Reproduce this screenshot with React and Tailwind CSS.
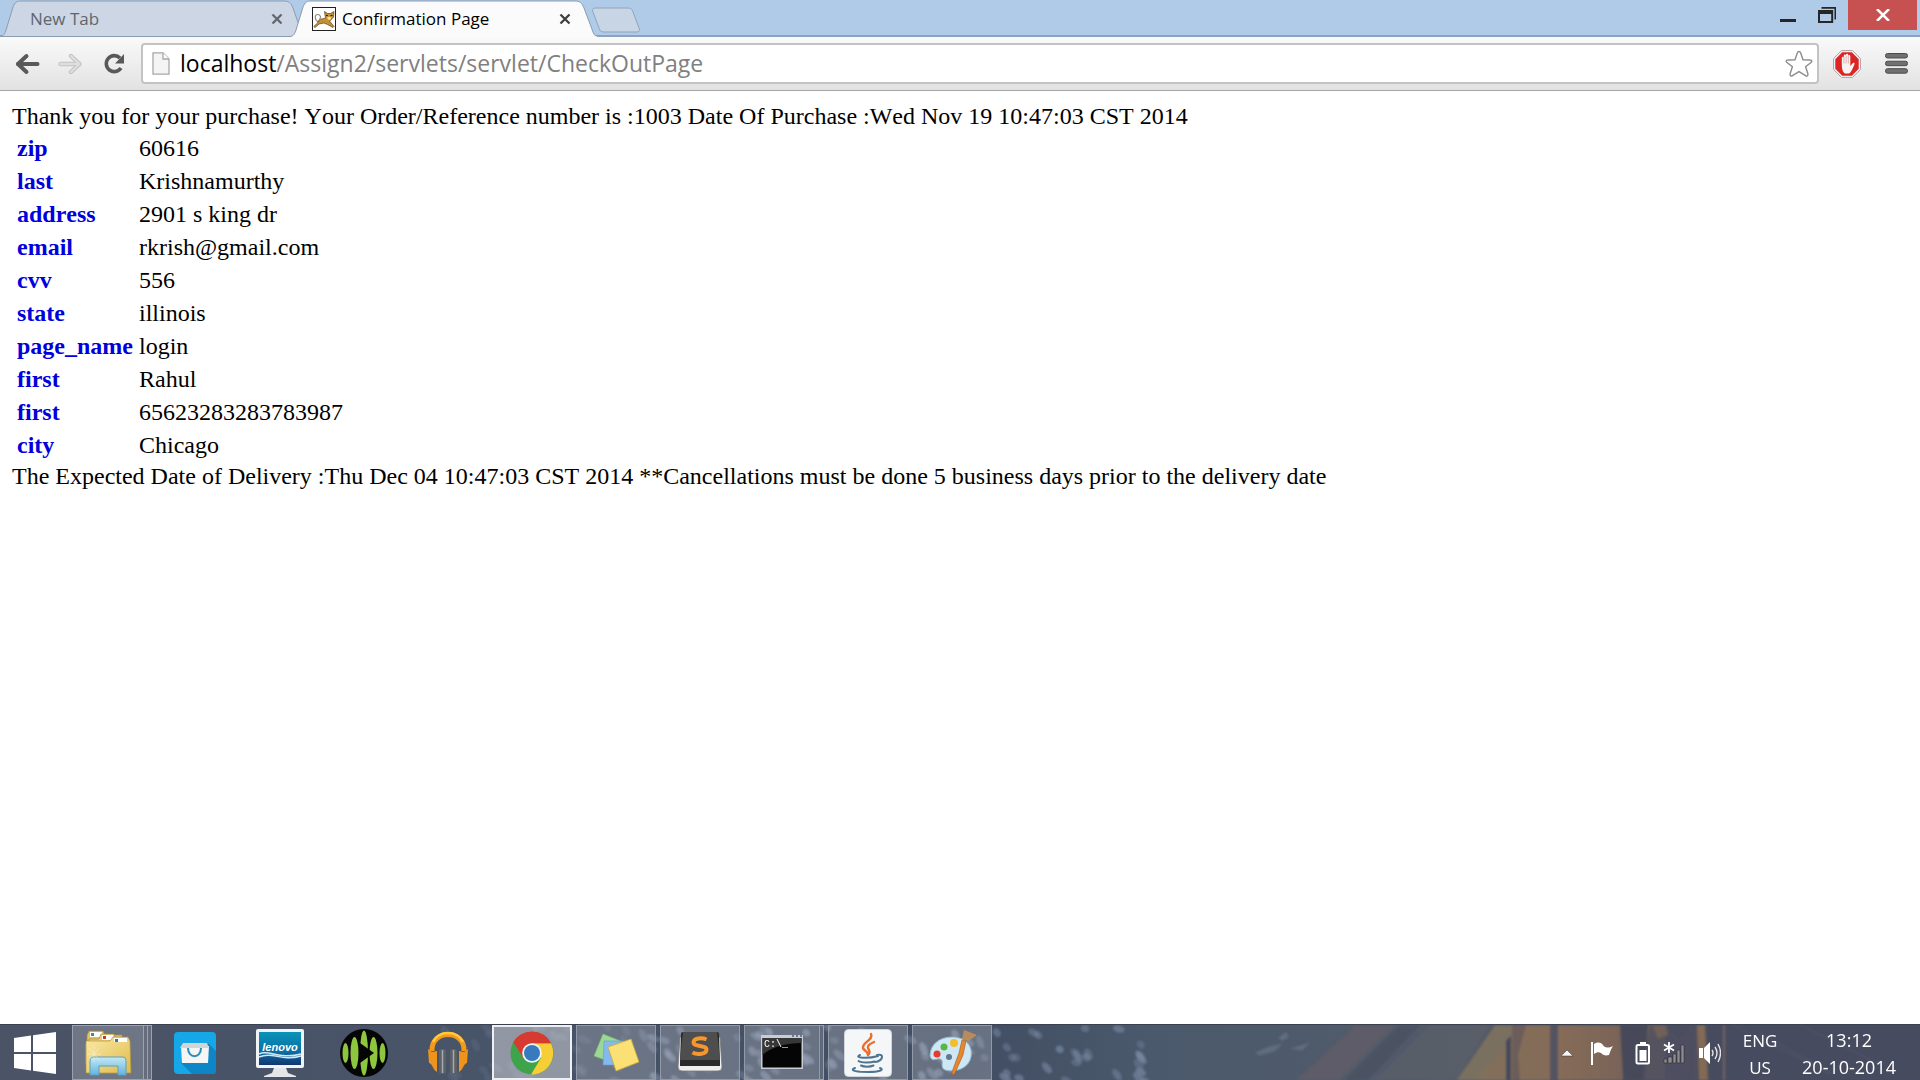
import React from "react";

const fields = [
  ["zip", "60616"],
  ["last", "Krishnamurthy"],
  ["address", "2901 s king dr"],
  ["email", "rkrish@gmail.com"],
  ["cvv", "556"],
  ["state", "illinois"],
  ["page_name", "login"],
  ["first", "Rahul"],
  ["first", "65623283283783987"],
  ["city", "Chicago"],
];

/* ---------- browser chrome ---------- */

function CloseGlyph({ color }) {
  return (
    <svg viewBox="0 0 12 12" className="size-3" aria-hidden="true">
      <path d="M1.5 1.5 10.5 10.5M10.5 1.5 1.5 10.5" stroke={color} strokeWidth="2.3" />
    </svg>
  );
}

function TomcatIcon() {
  return (
    <svg viewBox="0 0 24 24" className="size-6 shrink-0" aria-hidden="true">
      <rect x=".5" y=".5" width="23" height="23" fill="#fff" stroke="#222" />
      <path d="M6.500 15C2 13 2.500 7 6 7.500 9 8 9 11 7.500 12" fill="none" stroke="#8a8578" strokeWidth="1.100" />
      <path d="M7 13C9 11.500 12 12 13.500 11L12.500 4.500 15.500 6.500H18.500L22 4.500 21.500 10 19 13 17.500 14 22 19.500 21 20.500 15.500 17.500 12 16 7 17 3 20.500 1.800 19.500 5.500 16z" fill="#c58f33" stroke="#5a4418" strokeWidth=".7" />
      <path d="M14 8.500h2M18.500 8.500h2" stroke="#2d2410" strokeWidth="1.200" />
      <path d="M15 10.500l2-.8 2.500.8-1 2.200h-2.500z" fill="#f6e2a0" />
    </svg>
  );
}

function TabStrip() {
  return (
    <header className="flex h-[37px] items-start bg-[#b0cbe8] shadow-[inset_0_-2px_0_#8ba3c0]">
      <div role="tablist" className="flex h-[37px]">
        <div className="relative h-[37px] w-[296px]">
          <svg viewBox="0 0 306 37" className="absolute left-0 top-0 h-[37px] w-[306px]" aria-hidden="true">
            <path d="M0 36.500C4 36 5 33 6 30L13 7C15 2 17 1 21 1H284C289 1 291 3 293 8L303 36.500Z" fill="#ccd6e4" stroke="#8b9bb0" />
          </svg>
          <div className="relative flex h-full items-center pl-[30px] pr-[13px]">
            <button role="tab" aria-selected="false" className="flex-1 text-left text-[17px] text-[#60666e] [font-kerning:none]">New Tab</button>
            <button aria-label="Close New Tab" className="size-3"><CloseGlyph color="#63686f" /></button>
          </div>
        </div>
        <div className="relative h-[37px] w-[300px]">
          <svg viewBox="0 0 312 37" className="absolute left-[-6px] top-0 h-[37px] w-[312px]" aria-hidden="true">
            <path d="M0 37C4 36 5 33 6 30L13 7C15 2 17 1 21 1H285C290 1 292 3 294 8L303 32C304 35 305 36 310 37Z" fill="#fbfbfb" />
            <path d="M0 36.500C4 36 5 33 6 30L13 7C15 2 17 1 21 1H285C290 1 292 3 294 8L303 32C304 35 305 36 310 36.500" fill="none" stroke="#8b9bb0" />
          </svg>
          <div className="relative flex h-full items-center gap-[6px] pl-4 pr-[25px]">
            <TomcatIcon />
            <button role="tab" aria-selected="true" className="flex-1 whitespace-nowrap text-left text-[17px] text-black [font-kerning:none]">Confirmation Page</button>
            <button aria-label="Close Confirmation Page" className="size-3"><CloseGlyph color="#3f3f3f" /></button>
          </div>
        </div>
      </div>
      <button aria-label="New tab" className="-ml-1 mt-[7px]">
        <svg viewBox="0 0 48 26" className="h-[26px] w-12" aria-hidden="true">
          <path d="M4 1H35C39 1 40 2 41 5L47 21C48 24 47 25 44 25H12C9 25 8 24 7 21L1 5C0 2 1 1 4 1Z" fill="#c8d5e5" stroke="#8fa5bf" />
        </svg>
      </button>
      <div className="ml-auto flex items-start pr-[3px]">
        <button aria-label="Minimize" className="flex h-[30px] w-9 items-center justify-center">
          <svg viewBox="0 0 16 16" className="size-4" aria-hidden="true"><path d="M0 12h16v3H0z" fill="#262626" /></svg>
        </button>
        <button aria-label="Restore" className="flex h-[30px] w-[42px] items-center justify-center">
          <svg viewBox="0 0 18 16" className="h-4 w-[18px]" aria-hidden="true">
            <path d="M3.500 0H18V12.500H16.500V1.800H3.500z" fill="#262626" />
            <path d="M0 3h15.200v13H0zM2 7v7h11.200V7z" fill="#262626" fillRule="evenodd" />
          </svg>
        </button>
        <button aria-label="Close" className="flex h-[30px] w-[69px] items-center justify-center bg-[#c75050]">
          <svg viewBox="0 0 14 12" className="h-3 w-[14px]" aria-hidden="true"><path d="M1 0 13 12M13 0 1 12" stroke="#fff" strokeWidth="2.500" /></svg>
        </button>
      </div>
    </header>
  );
}

function Toolbar() {
  return (
    <nav className="flex h-[54px] items-center border-b border-[#a6a6a6] bg-gradient-to-b from-[#fafafa] to-[#e2e2e2] pl-[15px] pr-3">
      <button aria-label="Back" className="mr-[18px]">
        <svg viewBox="0 0 25 22" className="h-[22px] w-[25px]" fill="none" stroke="#595959" aria-hidden="true">
          <path d="M3 11H22.500" strokeLinecap="round" strokeWidth="4" /><path d="M11.500 3 3 11l8.500 8" strokeLinecap="round" strokeLinejoin="round" strokeWidth="4" />
        </svg>
      </button>
      <button aria-label="Forward" disabled className="mr-5">
        <svg viewBox="0 0 25 22" className="h-[22px] w-[25px]" fill="none" aria-hidden="true">
          <path d="M2.500 11H21M13 3 21.500 11l-8.500 8" stroke="#c3c3c3" strokeWidth="4.400" strokeLinecap="round" strokeLinejoin="round" />
          <path d="M2.500 11H21M13 3 21.500 11l-8.500 8" stroke="#dedede" strokeWidth="2.400" strokeLinecap="round" strokeLinejoin="round" />
        </svg>
      </button>
      <button aria-label="Reload" className="mr-[16px]">
        <svg viewBox="0 0 22 22" className="size-[22px]" aria-hidden="true">
          <path d="M17 5A8 8 0 1 0 18 15" fill="none" stroke="#595959" strokeWidth="3.600" />
          <path d="M21 1V10.500H12z" fill="#595959" />
        </svg>
      </button>
      <div className="flex h-[41px] min-w-0 flex-1 items-center rounded-[4px] border-2 border-[#c3c3c3] bg-white pl-[9px] pr-1">
        <svg viewBox="0 0 18 23" className="mr-[10px] h-[23px] w-[18px] shrink-0" aria-hidden="true">
          <path d="M1 .8H11L17 7V22.200H1z" fill="#f4f4f6" stroke="#a8a8a8" strokeWidth="1.300" />
          <path d="M11 .8V7H17" fill="#fff" stroke="#a8a8a8" strokeWidth="1.300" />
        </svg>
        <div className="relative h-full min-w-0 flex-1 text-[23px] leading-[37px]">
          <input aria-label="Address" type="url" className="absolute inset-0 w-full bg-transparent outline-none" />
          <span className="pointer-events-none relative whitespace-nowrap text-[#808080]">
            <span className="text-black">localhost</span>/Assign2/servlets/servlet/CheckOutPage
          </span>
        </div>
        <button aria-label="Bookmark this page">
          <svg viewBox="0 0 28 28" className="size-7" aria-hidden="true">
            <path d="M14 1.500C15 1.500 15.500 2.500 15.800 3.300L18 9.800 25 10C27 10 27.300 11.500 26 12.500L20.600 16.800 22.800 23.500C23.500 25.500 22 26.600 20.500 25.600L14 21.600 7.500 25.600C6 26.600 4.500 25.500 5.200 23.500L7.400 16.800 2 12.500C.7 11.500 1 10 3 10L10 9.800 12.200 3.300C12.500 2.500 13 1.500 14 1.500Z" fill="#fff" stroke="#8c8c8c" strokeWidth="1.400" />
          </svg>
        </button>
      </div>
      <button aria-label="Blocking extension" className="ml-[14px] mr-[24px]">
        <svg viewBox="0 0 28 28" className="size-7" aria-hidden="true">
          <path d="M8.500.5h11l8 8v11l-8 8h-11l-8-8v-11z" fill="#eee" stroke="#b9a5a5" />
          <path d="M9.200 2.300h9.600l6.900 6.900v9.600l-6.900 6.900H9.200L2.300 18.800V9.200z" fill="#dd2424" />
          <path d="M8.800 14V7.800c0-1.500 2-1.500 2 0V5.800c0-1.600 2.200-1.600 2.200 0V4.900c0-1.600 2.200-1.600 2.200 0v1.300c0-1.500 2.100-1.500 2.100 0V16l2.200-2.600c1-1.200 2.600-.4 2 .9C19.800 18 18.500 22.500 16 23.500h-4c-2-1-3.200-4-3.200-9.500z" fill="#f6f3f1" />
          <path d="M10.900 7v6.500M13.100 6v7.500M15.300 6v7.500" stroke="#cf8c8c" strokeWidth=".6" />
        </svg>
      </button>
      <button aria-label="Menu">
        <svg viewBox="0 0 23 21" className="h-[21px] w-[23px]" fill="#707070" stroke="#4c4c4c" aria-hidden="true">
          <rect x=".5" y=".5" width="22" height="4.500" rx="2" /><rect x=".5" y="8.200" width="22" height="4.500" rx="2" /><rect x=".5" y="15.700" width="22" height="4.500" rx="2" />
        </svg>
      </button>
    </nav>
  );
}

/* ---------- taskbar ---------- */

function noise(n) {
  const v = Math.sin(n * 127.1 + 11.7) * 43758.5453;
  return v - Math.floor(v);
}

const petals = Array.from({ length: 120 }, (_, i) => {
  const x = 430 + noise(i) * 720;
  return { x, y: noise(i + 300) * 58, r: 15 + noise(i + 600) * 55, s: 4 + noise(i + 900) * 4, o: x < 640 ? 0.2 : 0.3 + noise(i + 1200) * 0.4 };
});

function Wallpaper() {
  return (
    <svg viewBox="0 0 1920 56" preserveAspectRatio="none" className="absolute inset-0 h-full w-full" aria-hidden="true">
      <defs>
        <linearGradient id="wall" x1="0" x2="1" y1="0" y2="0">
          <stop offset="0" stopColor="#4b5366" /><stop offset=".25" stopColor="#485468" /><stop offset=".5" stopColor="#414d62" />
          <stop offset=".6" stopColor="#4a596c" /><stop offset=".7" stopColor="#505b6b" /><stop offset=".77" stopColor="#545b69" />
          <stop offset=".86" stopColor="#4a4e5d" /><stop offset="1" stopColor="#474c60" />
        </linearGradient>
        <filter id="soft" x="-5%" y="-20%" width="110%" height="140%"><feGaussianBlur stdDeviation="1.300" /></filter>
        <linearGradient id="wood" x1="0" x2="1" y1="0" y2="0">
          <stop offset="0" stopColor="#80705c" /><stop offset=".5" stopColor="#866c58" /><stop offset="1" stopColor="#705e58" />
        </linearGradient>
      </defs>
      <rect width="1920" height="56" fill="url(#wall)" />
      <g filter="url(#soft)">
        {petals.map((p, i) => (
          <ellipse key={i} cx={p.x} cy={p.y} rx={p.s} ry="3.600" fill="#7d8ba6" opacity={p.o} transform={`rotate(${p.r} ${p.x} ${p.y})`} />
        ))}
        <path d="M1255 28l14-6 14-3-9 8-15 4zM1278 13l8-6 3 5-7 4zM1290 24l20-6-8 8z" fill="#71819a" opacity=".5" />
        <path d="M1296 56 1355 0h40l-55 56z" fill="#5d5c68" />
        <path d="M1345 56 1400 0h20l-52 56z" fill="#4c5362" />
        <path d="M1375 56 1430 0h60l-34 56z" fill="#5b5f6a" opacity=".7" />
        <path d="M1457 56 1495 0h170v56z" fill="url(#wood)" />
        <path d="M1457 56 1497 0h28l-50 56z" fill="#7a6f60" />
        <path d="M1506 16l5-5v45h-5z" fill="#424a5c" /><path d="M1512 0h14l-8 30 2 26h-8z" fill="#6c5d5a" />
        <path d="M1550 0h8v56h-8z" fill="#525362" /><path d="M1620 0h28l-3 56h-22z" fill="#464a5a" />
        <path d="M1650 0h17l13 15 11-15h6v56h-55z" fill="#505062" opacity=".85" />
        <path d="M1652 0h14l2 10-10 4z" fill="#756557" opacity=".8" />
        <path d="M1697 0h8l3 56h-9z" fill="#836a55" /><path d="M1708 0h212v56h-208z" fill="#474c60" />
        <path d="M1724 0v56" stroke="#716160" strokeWidth="2" />
        <path d="M1732 0 1830 50M1760 8l70 40M1800 0l80 40" stroke="#55566a" strokeWidth="2" opacity=".6" fill="none" />
      </g>
    </svg>
  );
}

function ExplorerIcon() {
  return (
    <svg viewBox="0 0 48 48" className="size-12" aria-hidden="true">
      <defs><linearGradient id="fold" x1="0" x2="1" y1="0" y2="1"><stop offset="0" stopColor="#fae9a4" /><stop offset="1" stopColor="#dfbb4f" /></linearGradient>
        <linearGradient id="stand" x1="0" x2="0" y1="0" y2="1"><stop offset="0" stopColor="#c5e9f5" /><stop offset="1" stopColor="#62b4dd" /></linearGradient></defs>
      <path d="M3 44V6l2-4h14l2 4h17v38z" fill="#e3c464" stroke="#a88a3a" strokeWidth=".7" /><path d="M6 3h12v5H6z" fill="#fff" /><path d="M7 4h3v3H7z" fill="#3e9f47" />
      <path d="M5 44V10h10l2-5h13l2 5h12v34z" fill="#ecd077" stroke="#a88a3a" strokeWidth=".7" /><path d="M18 6h11v5H18z" fill="#fff" /><path d="M19 7h3v3h-3z" fill="#c73827" />
      <path d="M2 44V12h24l3-4h15l2 4 1 32z" fill="url(#fold)" stroke="#b0923f" strokeWidth=".7" /><path d="M30 9h13v4H30z" fill="#fff" /><path d="M31 10h3v3h-3z" fill="#2f78ba" />
      <path d="M6 46V32c0-3 1-4 4-4h28c3 0 4 1 4 4v14h-8v-9H15v9z" fill="url(#stand)" stroke="#5d9fc0" />
      <path d="M10 17v16M3 25h14M5 19l10 12M15 19 5 31" stroke="#fff" strokeWidth=".7" opacity=".5" />
    </svg>
  );
}
function StoreIcon() {
  return (
    <svg viewBox="0 0 48 48" className="size-12" aria-hidden="true">
      <rect x="2" y="3" width="42" height="42" rx="4" fill="#16a7e8" /><path d="M9 34 36 14l8 8v19q0 4-4 4H20z" fill="#0d86c8" />
      <path d="M9 17h28l-1 17H10z" fill="#f5f5f5" /><path d="M11 14h24l2 5H8z" fill="#d2d5d8" />
      <path d="M16 19c0 11 13 11 13 0" fill="none" stroke="#2a8fb8" strokeWidth="2" />
    </svg>
  );
}
function LenovoIcon() {
  return (
    <svg viewBox="0 0 48 48" className="size-12" aria-hidden="true">
      <defs><linearGradient id="scr" x1="0" x2="0" y1="0" y2="1"><stop offset="0" stopColor="#0994b8" /><stop offset=".6" stopColor="#0b6ea5" /><stop offset="1" stopColor="#12366f" /></linearGradient></defs>
      <rect width="48" height="39" rx="2" fill="#f1f4f6" /><rect x="3" y="3" width="42" height="33" fill="url(#scr)" />
      <path d="M3 25c10-5 20 6 42 0M3 28c14-6 22 5 42-1" fill="none" stroke="#cfe9f5" strokeWidth="1.500" />
      <text x="24" y="22" textAnchor="middle" fill="#fff" fontSize="11" fontWeight="700" fontStyle="italic" fontFamily="Liberation Sans, sans-serif">lenovo</text>
      <path d="M18 39h12l2 5 8 3v1H8v-1l8-3z" fill="#e4e6e8" />
    </svg>
  );
}
function PlayerIcon() {
  return (
    <svg viewBox="0 0 48 48" className="size-12" aria-hidden="true">
      <circle cx="24" cy="24" r="24" fill="#050505" />
      <g fill="#8dc63f"><ellipse cx="5.500" cy="24" rx="3" ry="10" /><ellipse cx="14.500" cy="24" rx="4" ry="16" /><ellipse cx="24" cy="24" rx="4" ry="22.500" /><ellipse cx="33.500" cy="24" rx="4" ry="16" /><ellipse cx="42.500" cy="24" rx="3" ry="10" /></g>
      <path d="M20 14 34 24 20 34z" fill="#050505" />
    </svg>
  );
}
function HeadphonesIcon() {
  return (
    <svg viewBox="0 0 48 48" className="size-12" aria-hidden="true">
      <path d="M8 22C7 0 41 0 40 22" fill="none" stroke="#f39a1b" strokeWidth="5" /><path d="M9 13C15 1 33 1 39 13" fill="none" stroke="#ffc83d" strokeWidth="2.500" />
      <path d="M4 20l4 3 5-1v21C8 40 9 35 5 34zM44 20l-4 3-5-1v21c5-3 4-8 8-9z" fill="#ee931c" />
      <rect x="15" y="20" width="7" height="25" rx="2" fill="#5d6065" /><rect x="26" y="20" width="7" height="25" rx="2" fill="#5d6065" /><path d="M18.500 21v23M29.500 21v23" stroke="#a5abb0" strokeWidth="1.500" />
    </svg>
  );
}
function ChromeIcon() {
  return (
    <svg viewBox="0 0 48 48" className="size-12" aria-hidden="true">
      <circle cx="24" cy="24" r="21.500" fill="#3fa34b" />
      <path d="M24 24 5.400 13.200A21.500 21.500 0 0 1 42.800 14H24z" fill="#d63a31" /><path d="M5.400 13.200 15.500 29 24 14h18.800A21.500 21.500 0 0 0 5.400 13.200z" fill="#d63a31" />
      <path d="M24 14.500h19A21.500 21.500 0 0 1 23 45.500L33 29z" fill="#f7ce35" />
      <circle cx="24" cy="24" r="9.800" fill="#f5f5f5" /><circle cx="24" cy="24" r="8" fill="#357bbd" />
    </svg>
  );
}
function NotesIcon() {
  return (
    <svg viewBox="0 0 48 48" className="size-12" aria-hidden="true">
      <path d="M11 5 31 13 24 35 2 27z" fill="#9bd894" stroke="#7cb875" strokeWidth=".6" /><path d="M12 12H32V36H11z" fill="#83b9ee" stroke="#679bd0" strokeWidth=".6" />
      <path d="M16 18 39 10 47 33 24 42z" fill="#fbe075" stroke="#c9a83e" strokeWidth=".8" />
    </svg>
  );
}
function SublimeIcon() {
  return (
    <svg viewBox="0 0 48 48" className="size-12" aria-hidden="true">
      <path d="M4 8 2 38q0 4 4 4h36q4 0 4-4L44 8z" fill="#efefef" stroke="#777" strokeWidth=".8" />
      <path d="M7 3h34q2 0 2 2l1 28v4H4v-4L5 5q0-2 2-2z" fill="#2a2a2a" /><path d="M7 3h34l3 28H4z" fill="#4e4e4e" />
      <path d="M30.500 10.500C26 8.500 17.500 9 17.500 13.500 17.500 18 30.500 16 30.500 20.500 30.500 25.500 21 26 16.500 23.500" fill="none" stroke="#f7962e" strokeWidth="4" />
    </svg>
  );
}
function ConsoleIcon() {
  return (
    <svg viewBox="0 0 48 48" className="size-12" aria-hidden="true">
      <path d="M3 6h42v34H3z" fill="#c9ced6" /><path d="M4.500 9h39v29.500h-39z" fill="#050505" /><path d="M4.500 9h39v5C25 14 12 19 4.500 26z" fill="#373737" />
      <path d="M34 7h2M38 7h2M42 7h2" stroke="#44618f" strokeWidth="1.500" />
      <text x="6" y="18" fill="#fff" fontSize="10" fontFamily="Liberation Mono, monospace">C:\_</text>
    </svg>
  );
}
function JavaIcon() {
  return (
    <svg viewBox="0 0 48 48" className="size-12" aria-hidden="true">
      <rect x=".5" y=".5" width="47" height="47" rx="4" fill="#f4f6f7" stroke="#cfd5da" />
      <g fill="none" strokeLinecap="round"><path d="M27 5c3 6-9 8-8 14 1 3 5 3 5 7M30 13c-7 3-7 5-5 8 1 2 0 4-1 5" stroke="#e8702a" strokeWidth="2.400" />
        <path d="M16 26c-7 3 8 4 18 1M14.500 32c3 2 12 2 16 .5M17 36.500c3 1.500 9 1.500 12.500 0M33 26c8-2 6 6-2 7M11 39c-7 3 4 4 13 4 11 0 17-2 12-4" stroke="#4d7590" strokeWidth="2" /></g>
    </svg>
  );
}
function PaintIcon() {
  return (
    <svg viewBox="0 0 48 48" className="size-12" aria-hidden="true">
      <path d="M2 27C2 15 12 8 24 8 38 8 45 17 43 28 41 39 28 44 17 41 11 38 17 31 12 30 8 29 4 34 2 27z" fill="#cde7f4" stroke="#8eb5cc" /><circle cx="21" cy="28" r="3" fill="#63788d" />
      <circle cx="9" cy="25" r="3.500" fill="#e23b30" /><circle cx="16" cy="18" r="3.500" fill="#59b544" /><circle cx="26" cy="14" r="4" fill="#f5bd2b" />
      <path d="M38 12 35 26 27 44Q24 48 24 43L31 24 34 11z" fill="#e48730" stroke="#a4571d" strokeWidth=".6" /><path d="M36 1 49 6 41 12 34 10z" fill="#b58b60" />
    </svg>
  );
}

const apps = [
  { name: "File Explorer", Icon: ExplorerIcon, state: "stack" },
  { name: "Store", Icon: StoreIcon, state: "pinned" },
  { name: "Lenovo", Icon: LenovoIcon, state: "pinned" },
  { name: "Media player", Icon: PlayerIcon, state: "pinned" },
  { name: "Music", Icon: HeadphonesIcon, state: "pinned" },
  { name: "Chrome", Icon: ChromeIcon, state: "active" },
  { name: "Sticky Notes", Icon: NotesIcon, state: "open" },
  { name: "Sublime Text", Icon: SublimeIcon, state: "open" },
  { name: "Command Prompt", Icon: ConsoleIcon, state: "pair" },
  { name: "Java", Icon: JavaIcon, state: "open" },
  { name: "Paint", Icon: PaintIcon, state: "open" },
];

const frames = {
  pinned: "border border-transparent",
  open: "border border-[#9299a7] bg-white/20",
  active: "border-2 border-[#eef0f3] bg-white/40",
  stack: "border border-[#9ba1ad] bg-white/20",
  pair: "border border-[#9299a7] bg-white/20",
};

function AppButton({ name, Icon, state }) {
  return (
    <button aria-label={name} className="flex h-[55px] w-20">
      <span className={"flex h-full flex-1 items-center justify-center " + frames[state]}><Icon /></span>
      {(state === "stack" || state === "pair") && <span className="h-full w-1 border-y border-r border-[#9ba1ad] bg-white/15" />}
      {state === "stack" && <span className="h-full w-1 border-y border-r border-[#9ba1ad] bg-white/15" />}
    </button>
  );
}

function Taskbar() {
  return (
    <footer className="relative h-14 overflow-hidden border-t border-[#3b414e]">
      <Wallpaper />
      <div className="relative flex h-full items-start">
        <button aria-label="Start" className="flex h-full w-[72px] items-center pl-[14px]">
          <svg viewBox="0 0 42 42" className="size-[42px]" fill="#fff" aria-hidden="true">
            <path d="M0 6 17 3.500V20H0zM19 3.200 42 0V20H19zM0 22H17V38.500L0 36zM19 22H42V42L19 38.800z" />
          </svg>
        </button>
        <div className="flex gap-1">{apps.map((a) => <AppButton key={a.name} {...a} />)}</div>
        <div className="ml-auto flex h-full items-center text-white">
          <button aria-label="Show hidden icons" className="mr-[18px]">
            <svg viewBox="0 0 12 8" className="h-2 w-3" aria-hidden="true"><path d="M0 7 6 1l6 6z" fill="#f5f5f5" stroke="#333" strokeWidth=".5" /></svg>
          </button>
          <button aria-label="Action Center" className="mr-[22px]">
            <svg viewBox="0 0 22 24" className="h-6 w-[22px]" aria-hidden="true"><path d="M0 1h2v23H0zM3 3c4-2 6-2 9 1 1 2 4 4 10 1-2 3-3 6-4 9-4 1-6 0-8-2-2-1-4-1-7 1z" fill="#fff" /></svg>
          </button>
          <button aria-label="Battery" className="mr-[12px]">
            <svg viewBox="0 0 16 24" className="h-6 w-4" aria-hidden="true"><rect x="1.500" y="4" width="12.500" height="18.500" rx="1.500" fill="none" stroke="#fff" strokeWidth="2" /><path d="M5 1h6v3H5zM4.500 9h7v11h-7z" fill="#fff" /></svg>
          </button>
          <button aria-label="Network" className="mr-[14px]">
            <svg viewBox="0 0 22 24" className="h-6 w-[22px]" aria-hidden="true">
              <path d="M1 18h3v4H1zM5 16h4v6H5zM10 13h3v9h-3zM14 9h3v13h-3zM18 4h3v18h-3z" fill="#8d8d90" stroke="#2e2e33" strokeWidth=".6" />
              <path d="M6 1v11M1 3.500l10 6M11 3.500 1 9.500" stroke="#fff" strokeWidth="1.800" />
            </svg>
          </button>
          <button aria-label="Volume" className="mr-[21px]">
            <svg viewBox="0 0 22 24" className="h-6 w-[22px]" aria-hidden="true">
              <path d="M0 7h4v10H0zM5 7l6-6v22l-6-6z" fill="#fff" /><path d="M13 9q2 3 0 6M16 6q4 6 0 12M19 3q5 9 0 18" fill="none" stroke="#e4e4e8" strokeWidth="1.400" />
            </svg>
          </button>
          <button aria-label="Input language" className="mr-6 w-9 pt-[2px] text-center text-[17px] leading-[27px]">ENG<br />US</button>
          <time className="mr-6 pt-[2px] text-center text-[18px] leading-[27px]">13:12<br />20-10-2014</time>
        </div>
      </div>
    </footer>
  );
}

export default function App() {
  return (
    <div className="flex min-h-screen flex-col bg-white font-['Open_Sans','Noto_Sans',sans-serif]">
      <TabStrip />
      <Toolbar />
      <main className="flex-1 p-3 font-['Liberation_Serif',serif] text-[24px] leading-[27px] text-black [font-kerning:none]">
        <p>Thank you for your purchase! Your Order/Reference number is :1003 Date Of Purchase :Wed Nov 19 10:47:03 CST 2014</p>
        <table className="border-separate border-spacing-[3px] leading-[28px]">
          <tbody>
            {fields.map(([label, value], i) => (
              <tr key={i}>
                <th scope="row" className="py-px pl-[2px] pr-px text-left font-bold text-[#0000dd]">{label}</th>
                <td className="px-[2px] py-px">{value}</td>
              </tr>
            ))}
          </tbody>
        </table>
        <p>The Expected Date of Delivery :Thu Dec 04 10:47:03 CST 2014 **Cancellations must be done 5 business days prior to the delivery date</p>
      </main>
      <Taskbar />
    </div>
  );
}
